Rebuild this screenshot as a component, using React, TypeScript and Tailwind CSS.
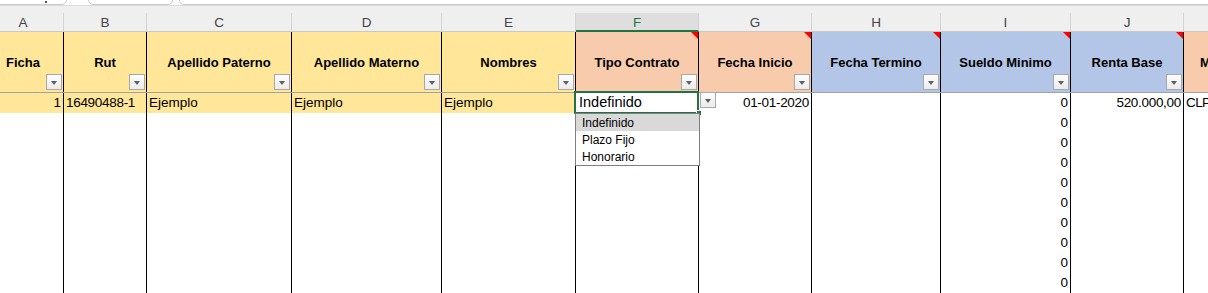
import React from "react";

type Col = {
  key: string;
  width: number;
  title: string;
  fill: string;
  note?: boolean;
};

const cols: Col[] = [
  { key: "A", width: 64, title: "Ficha", fill: "bg-[#ffe699]" },
  { key: "B", width: 83, title: "Rut", fill: "bg-[#ffe699]" },
  { key: "C", width: 145, title: "Apellido Paterno", fill: "bg-[#ffe699]" },
  { key: "D", width: 150, title: "Apellido Materno", fill: "bg-[#ffe699]" },
  { key: "E", width: 134, title: "Nombres", fill: "bg-[#ffe699]" },
  { key: "F", width: 123, title: "Tipo Contrato", fill: "bg-[#f8cbad]", note: true },
  { key: "G", width: 113, title: "Fecha Inicio", fill: "bg-[#f8cbad]", note: true },
  { key: "H", width: 129, title: "Fecha Termino", fill: "bg-[#b4c6e7]", note: true },
  { key: "I", width: 130, title: "Sueldo Minimo", fill: "bg-[#b4c6e7]", note: true },
  { key: "J", width: 113, title: "Renta Base", fill: "bg-[#b4c6e7]", note: true },
  { key: "K", width: 120, title: "Moneda", fill: "bg-[#f8cbad]" },
];

const firstRow: Record<string, { v: string; right?: boolean }> = {
  A: { v: "1", right: true },
  B: { v: "16490488-1" },
  C: { v: "Ejemplo" },
  D: { v: "Ejemplo" },
  E: { v: "Ejemplo" },
  F: { v: "" },
  G: { v: "01-01-2020", right: true },
  H: { v: "" },
  I: { v: "0", right: true },
  J: { v: "520.000,00", right: true },
  K: { v: "CLP" },
};

function FilterButton() {
  return (
    <div className="absolute right-[1px] bottom-[2px] w-[16px] h-[16px] border border-[#a9a9a9] bg-gradient-to-b from-[#fdfdfd] to-[#ececec] flex items-center justify-center">
      <div className="w-0 h-0 mt-[1px] border-l-[3.5px] border-r-[3.5px] border-t-[4px] border-l-transparent border-r-transparent border-t-[#5f5f5f]" />
    </div>
  );
}

export default function App() {
  const lastKey = "K";
  return (
    <div className="relative w-[1208px] h-[293px] overflow-hidden bg-white font-['Liberation_Sans',Arial,sans-serif] text-black">
      {/* tab strip */}
      <div className="h-[6px] bg-white overflow-hidden flex items-end border-b border-[#dcdcdc]">
        <div className="relative -ml-[12px] w-[79px] h-[14px] rounded-b-[5px] border border-[#c9c9c9] bg-white">
          <span className="absolute right-[19px] bottom-[1px] w-[2px] h-[2px] bg-[#555]" />
        </div>
        <div className="relative ml-[21px] w-[85px] h-[14px] rounded-b-[5px] border border-[#c9c9c9] bg-white">
          <span className="absolute right-[29px] top-[6px] w-[2px] h-[2px] bg-[#777]" />
        </div>
        <div className="ml-[6px] flex-1 -mr-[20px] h-[14px] rounded-b-[5px] border border-[#c9c9c9] bg-white" />
      </div>

      {/* column letters */}
      <div className="h-[26px] pt-[7px] bg-[#efefef] flex">
        {cols.map((c) => (
          <div
            key={c.key}
            style={{ width: c.width }}
            className={`shrink-0 h-[19px] flex items-center justify-center pt-[3px] text-[13.5px] border-r border-[#d4d4d4] ${
              c.key === "F"
                ? "bg-[#dedede] text-[#217346] border-b-2 border-b-[#217346]"
                : "text-[#444] border-b border-b-[#c8c8c8]"
            } ${c.key === "A" ? "pr-[17px]" : ""}`}
          >
            {c.key}
          </div>
        ))}
      </div>

      {/* header row */}
      <div className="flex h-[61px] border-b border-[#a3a3a3]">
        {cols.map((c) => (
          <div
            key={c.key}
            style={{ width: c.width }}
            className={`relative shrink-0 h-full flex items-center text-[13px] font-bold ${c.fill} ${
              c.key === lastKey ? "justify-start pl-[16px] whitespace-nowrap" : "justify-center border-r border-black"
            } ${c.key === "A" ? "pr-[17px]" : ""}`}
          >
            <span className="mt-[1px]">{c.title}</span>
            {c.key !== lastKey && <FilterButton />}
            {c.note && (
              <div className="absolute top-0 right-0 w-0 h-0 border-l-[7px] border-l-transparent border-t-[7px] border-t-[#ff0000]" />
            )}
          </div>
        ))}
      </div>

      {/* data rows */}
      {Array.from({ length: 10 }).map((_, r) => (
        <div key={r} className="flex h-[20px]">
          {cols.map((c) => {
            const cell = r === 0 ? firstRow[c.key] : c.key === "I" ? { v: "0", right: true } : { v: "" };
            const yellow = r === 0 && ["A", "B", "C", "D", "E"].includes(c.key);
            return (
              <div
                key={c.key}
                style={{ width: c.width }}
                className={`shrink-0 h-full flex items-center text-[13.5px] whitespace-nowrap overflow-hidden ${
                  yellow ? "bg-[#ffe699]" : "bg-white"
                } ${c.key === lastKey ? "tracking-[-0.6px]" : "border-r border-black"} ${
                  cell.right ? "justify-end pr-[2px]" : "justify-start pl-[2px]"
                } ${c.key === "B" || c.key === "G" || c.key === "J" ? "tracking-[-0.3px]" : ""}`}
              >
                {cell.v}
              </div>
            );
          })}
        </div>
      ))}

      {/* active cell */}
      <div className="absolute left-[574px] top-[91px] w-[125px] h-[23px] border-2 border-[#217346] bg-white flex items-center pl-[3px] text-[14.5px]">
        Indefinido
      </div>
      <div className="absolute left-[696px] top-[110px] w-[6px] h-[6px] bg-[#217346] border border-white" />

      {/* dropdown button */}
      <div className="absolute left-[700px] top-[92px] w-[16px] h-[16px] border border-[#a9a9a9] bg-gradient-to-b from-[#fdfdfd] to-[#ececec] flex items-center justify-center">
        <div className="w-0 h-0 mt-[1px] border-l-[3.5px] border-r-[3.5px] border-t-[4px] border-l-transparent border-r-transparent border-t-[#5f5f5f]" />
      </div>

      {/* dropdown list */}
      <div className="absolute left-[575px] top-[113px] w-[125px] h-[53px] border border-[#7f7f7f] bg-white text-[12px] flex flex-col">
        <div className="h-[17px] bg-[#d9d9d9] flex items-center pl-[6px]">Indefinido</div>
        <div className="h-[17px] flex items-center pl-[6px]">Plazo Fijo</div>
        <div className="h-[17px] flex items-center pl-[6px]">Honorario</div>
      </div>
    </div>
  );
}
